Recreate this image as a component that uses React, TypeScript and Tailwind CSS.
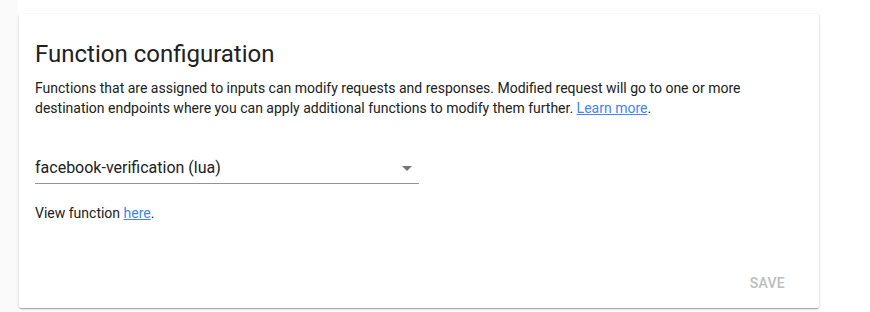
import React from 'react';

const App: React.FC = () => {
  return (
    <div className="flex h-[312px] w-[870px] overflow-hidden bg-white font-['Roboto',sans-serif]">
      <div className="w-[18px] shrink-0 bg-[#fafafa]" />
      <div className="flex-1 pl-[1px] pt-[14px]">
        <div className="flex h-[294px] w-[800px] flex-col rounded-[2px] bg-white shadow-[0_1px_3px_rgba(0,0,0,0.2),0_1px_1px_rgba(0,0,0,0.14),0_2px_1px_-1px_rgba(0,0,0,0.12)]">
          <div className="px-4 pt-6">
            <h2 className="text-[24px] leading-8 font-normal text-[#212121]">Function configuration</h2>
            <p className="mt-2 text-[14px] leading-5 text-[#212121]">
              Functions that are assigned to inputs can modify requests and responses. Modified request will go to one or more
              destination endpoints where you can apply additional functions to modify them further.{' '}
              <a href="#" className="text-[#4285f4] underline">Learn more</a>
              <span>.</span>
            </p>
            <div className="mt-[38px] flex w-[384px] items-center justify-between border-b border-[#949494] pb-[3px]">
              <span className="text-[16px] leading-6 text-[#212121]">facebook-verification (lua)</span>
              <span className="mr-[7px] h-0 w-0 border-x-[5px] border-t-[5px] border-x-transparent border-t-[#757575]" />
            </div>
            <p className="mt-[19px] text-[14px] leading-5 text-[#212121]">
              View function <a href="#" className="text-[#4285f4] underline">here</a>.
            </p>
          </div>
          <div className="mt-auto flex justify-end pb-[7px] pr-[18px]">
            <button className="h-9 min-w-16 px-4 text-[14px] font-medium uppercase tracking-[0.02em] text-[#bdbdbd]">Save</button>
          </div>
        </div>
      </div>
    </div>
  );
};

export default App;
